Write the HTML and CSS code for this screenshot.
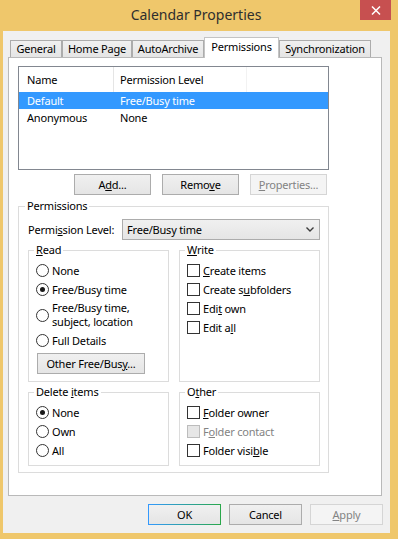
FILE: index.html
```html
<!DOCTYPE html>
<html>
<head>
<meta charset="utf-8">
<title>Calendar Properties</title>
<link rel="stylesheet" href="styles.css">
</head>
<body>
<div class="window">
  <div class="titlebar">
    <div class="title">Calendar Properties</div>
    <div class="close">
      <svg width="10" height="9" viewBox="0 0 10 9"><path d="M1 0.5 L9 8.5 M9 0.5 L1 8.5" stroke="#ffffff" stroke-width="1.5" fill="none"/></svg>
    </div>
  </div>
  <div class="client">
    <div class="tabs">
      <div class="tab w-general">General</div>
      <div class="tab w-home">Home Page</div>
      <div class="tab w-archive">AutoArchive</div>
      <div class="tab tab-active w-perm">Permissions</div>
      <div class="tab w-sync">Synchronization</div>
    </div>
    <div class="panel">
      <div class="content">
        <div class="list">
          <div class="lv-head"><div class="c1">Name</div><div class="c2 head-c2">Permission Level</div><div class="c3"></div></div>
          <div class="lv-row selected"><div class="c1">Default</div><div class="c2">Free/Busy time</div></div>
          <div class="lv-row"><div class="c1">Anonymous</div><div class="c2">None</div></div>
        </div>
        <div class="list-buttons">
          <button class="btn btn-list">A<u>d</u>d...</button>
          <button class="btn btn-list">Remo<u>v</u>e</button>
          <button class="btn btn-list" disabled><u>P</u>roperties...</button>
        </div>
        <fieldset class="group perm">
          <legend>Permissions</legend>
          <div class="level-row">
            <span class="level-label">Permi<u>s</u>sion Level:</span>
            <div class="combo">
              <span class="combo-text">Free/Busy time</span>
              <svg class="chev" width="8" height="5" viewBox="0 0 8 5"><path d="M0.5 0.5 L4 4 L7.5 0.5" stroke="#3c3c3c" stroke-width="1.4" fill="none"/></svg>
            </div>
          </div>
          <div class="cols">
            <fieldset class="group sub">
              <legend><u>R</u>ead</legend>
              <div class="opt"><span class="radio"></span><span>None</span></div>
              <div class="opt"><span class="radio on"></span><span>Free/Busy time</span></div>
              <div class="opt opt-tall"><span class="radio"></span><span>Free/Busy time,<br>subject, location</span></div>
              <div class="opt"><span class="radio"></span><span>Full Details</span></div>
              <button class="btn btn-other">Other Free/Bus<u>y</u>...</button>
            </fieldset>
            <fieldset class="group sub">
              <legend><u>W</u>rite</legend>
              <div class="opt"><span class="check"></span><span><u>C</u>reate items</span></div>
              <div class="opt"><span class="check"></span><span>Create s<u>u</u>bfolders</span></div>
              <div class="opt"><span class="check"></span><span>Edi<u>t</u> own</span></div>
              <div class="opt"><span class="check"></span><span>Edit a<u>l</u>l</span></div>
            </fieldset>
          </div>
          <div class="cols cols-2">
            <fieldset class="group sub sub-low">
              <legend>Delete <u>i</u>tems</legend>
              <div class="opt"><span class="radio on"></span><span>None</span></div>
              <div class="opt"><span class="radio"></span><span>Own</span></div>
              <div class="opt"><span class="radio"></span><span>All</span></div>
            </fieldset>
            <fieldset class="group sub sub-low">
              <legend>O<u>t</u>her</legend>
              <div class="opt"><span class="check"></span><span><u>F</u>older owner</span></div>
              <div class="opt disabled"><span class="check"></span><span>F<u>o</u>lder contact</span></div>
              <div class="opt"><span class="check"></span><span>Folder visi<u>b</u>le</span></div>
            </fieldset>
          </div>
        </fieldset>
      </div>
    </div>
    <div class="footer">
      <button class="btn btn-dlg btn-default">OK</button>
      <button class="btn btn-dlg">Cancel</button>
      <button class="btn btn-dlg" disabled><u>A</u>pply</button>
    </div>
  </div>
</div>
</body>
</html>
```
FILE: styles.css
```css
html, body {
  margin: 0;
  padding: 0;
}
body {
  background: #efc76b;
  width: 398px;
  height: 539px;
  overflow: hidden;
  font-family: "Noto Sans", "Segoe UI", "Liberation Sans", sans-serif;
  font-size: 11px;
  letter-spacing: -0.2px;
  line-height: 14px;
  color: #000;
}
.window {
  width: 398px;
}
.titlebar {
  height: 31px;
  display: grid;
  grid-template-columns: 1fr auto 1fr;
  padding-right: 6px;
}
.title {
  grid-column: 2;
  font-size: 14px;
  letter-spacing: 0;
  line-height: 29px;
  color: #2e2e2e;
}
.close {
  grid-column: 3;
  justify-self: end;
  align-self: start;
  width: 31px;
  height: 20px;
  margin-right: 1px;
  background: #c75050;
  display: flex;
  align-items: center;
  justify-content: center;
}
.client {
  margin: 0 8px 0 3px;
  background: #f0f0f0;
  padding: 6px 8px 8px 5px;
}
.tabs {
  display: flex;
  align-items: flex-end;
  height: 21px;
  margin: 0 0 -1px 2px;
}
.tab {
  box-sizing: border-box;
  height: 17px;
  margin-bottom: 1px;
  border: 1px solid #acacac;
  border-bottom: none;
  background: linear-gradient(#f0f0f0, #e5e5e5);
  text-align: center;
  line-height: 16px;
  white-space: nowrap;
}
.tab-active {
  position: relative;
  z-index: 1;
  height: 21px;
  margin-bottom: 0;
  background: #ffffff;
  border-color: #c4c4c4;
  line-height: 18px;
}
.w-general { width: 52px; }
.w-home { width: 70px; }
.w-archive { width: 72px; }
.w-perm { width: 75px; }
.w-sync { width: 92px; }
.panel {
  background: #ffffff;
  border: 1px solid #b9b9b9;
  padding: 8px 0 22px 9px;
}
.content {
  width: 311px;
}
.list {
  box-sizing: border-box;
  height: 104px;
  border: 1px solid #828790;
  background: #fff;
}
.lv-head {
  display: flex;
  height: 25px;
  line-height: 25px;
}
.lv-row {
  display: flex;
  height: 17px;
  line-height: 17px;
}
.c1 {
  box-sizing: border-box;
  width: 94px;
  padding-left: 8px;
}
.c2 {
  box-sizing: border-box;
  padding-left: 7px;
}
.head-c2 {
  border-left: 1px solid #e5e5e5;
  padding-left: 6px;
  width: 133px;
}
.c3 {
  border-left: 1px solid #f2f2f2;
}
.selected {
  background: #3399ff;
  color: #fff;
}
.list-buttons {
  display: flex;
  justify-content: flex-end;
  gap: 11px;
  margin: 4px 2px 0 0;
}
.btn {
  box-sizing: border-box;
  height: 21px;
  padding: 0;
  border: 1px solid #acacac;
  background: linear-gradient(#f0f0f0, #e5e5e5);
  font: inherit;
  letter-spacing: inherit;
  color: #000;
  line-height: 18px;
  text-align: center;
}
.btn:disabled {
  background: #f4f4f4;
  border-color: #d5d5d5;
  color: #838383;
}
.btn-list {
  width: 77px;
}
.group {
  margin: 0;
  border: 1px solid #dcdcdc;
  min-inline-size: 0;
}
.group legend {
  padding: 0 2px;
  line-height: 14px;
}
.perm {
  margin-top: 4px;
  padding: 6px 8px 6px 9px;
}
.perm > legend {
  margin-left: -3px;
}
.level-row {
  display: flex;
  align-items: center;
  height: 21px;
}
.level-label {
  width: 94px;
  flex: none;
}
.combo {
  box-sizing: border-box;
  flex: 1;
  height: 21px;
  border: 1px solid #acacac;
  background: linear-gradient(#f0f0f0, #e5e5e5);
  display: flex;
  align-items: center;
  justify-content: space-between;
  padding: 0 5px 0 4px;
}
.chev {
  display: block;
}
.cols {
  display: grid;
  grid-template-columns: 141px 141px;
  column-gap: 10px;
  margin-top: 3px;
}
.sub {
  padding: 4px 6px 7px 7px;
}
.sub > legend {
  margin-left: -2px;
}
.sub-low {
  padding-bottom: 5px;
}
.opt {
  display: flex;
  align-items: center;
  gap: 3px;
  height: 19px;
  white-space: nowrap;
}
.opt-tall {
  height: 32px;
}
.radio {
  box-sizing: border-box;
  flex: none;
  width: 13px;
  height: 13px;
  border: 1px solid #333;
  border-radius: 50%;
  background: #fff;
  display: flex;
  align-items: center;
  justify-content: center;
}
.radio.on::after {
  content: "";
  width: 5px;
  height: 5px;
  border-radius: 50%;
  background: #1a1a1a;
}
.check {
  box-sizing: border-box;
  flex: none;
  width: 13px;
  height: 13px;
  border: 1px solid #333;
  background: #fff;
}
.disabled {
  color: #838383;
}
.disabled .check {
  background: #e6e6e6;
  border-color: #bcbcbc;
}
.btn-other {
  display: block;
  width: 108px;
  margin-top: 3px;
  margin-left: 1px;
}
.footer {
  display: flex;
  justify-content: flex-end;
  gap: 8px;
  margin: 8px -1px 0 0;
}
.btn-dlg {
  width: 73px;
}
.btn-default {
  border: 1px solid transparent;
  border-image: linear-gradient(to right, #3399ff, #2aa84a) 1;
}
u {
  text-decoration: underline;
  text-underline-offset: 1px;
}
```
